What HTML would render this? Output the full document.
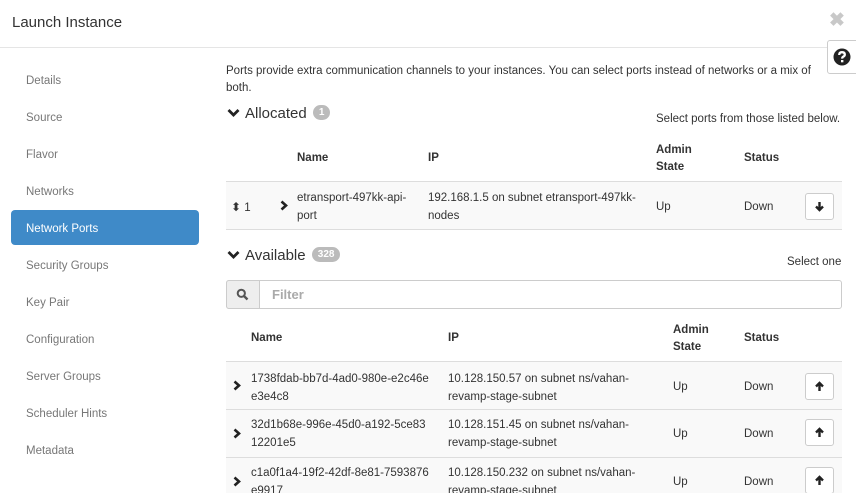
<!DOCTYPE html>
<html style="width:856px;height:493px;overflow:hidden"><head><meta charset="utf-8"><style>
*{margin:0;padding:0;box-sizing:border-box}
body{width:856px;height:493px;overflow:hidden;background:#fff;font-family:"Liberation Sans",sans-serif;color:#333;position:relative;font-size:11.5px}
.a{position:absolute;white-space:nowrap}
.side{color:#777;font-size:11.5px;left:26px}
.hd{font-weight:bold;font-size:11.5px;line-height:17px}
.row{position:absolute;left:226px;width:616px;background:#f9f9f9;border-bottom:1px solid #ddd;overflow:hidden}
.cell{position:absolute;line-height:18px;font-size:11.5px;white-space:nowrap}
.btn{position:absolute;left:579px;width:29px;height:27px;border:1px solid #ccc;border-radius:3px;background:#fff}
.btn svg{position:absolute;left:8px;top:7px}
.badge{display:inline-block;background:#bbb;color:#fff;border-radius:9px;font-size:10px;font-weight:bold;padding:2px 6px;vertical-align:middle;margin-left:2px;position:relative;top:-2px}
.chev{position:absolute}
</style></head><body>
<div class="a" style="left:12px;top:14px;font-size:15px;color:#333">Launch Instance</div>
<div class="a" style="left:829px;top:9px;font-size:19px;color:#c8c8c8;font-weight:bold">✖</div>
<div class="a" style="left:0;top:47px;width:856px;height:1px;background:#e5e5e5"></div>
<div class="a" style="left:827px;top:40px;width:30px;height:34px;border:1px solid #ccc;border-radius:3px 0 0 3px;background:#fff"></div>
<svg class="a" style="left:833px;top:48px" width="18" height="18" viewBox="0 0 18 18"><circle cx="9" cy="9" r="8.5" fill="#222"/><path d="M6.2 7 Q6.2 4.2 9 4.2 Q11.8 4.2 11.8 6.6 Q11.8 8 10 8.8 Q9.2 9.3 9.2 10.6" stroke="#fff" stroke-width="2.3" fill="none"/><rect x="8" y="12" width="2.4" height="2.3" fill="#fff"/></svg>

<div class="a side" style="top:75px">Details</div>
<div class="a side" style="top:112px">Source</div>
<div class="a side" style="top:149px">Flavor</div>
<div class="a side" style="top:186px">Networks</div>
<div class="a" style="left:11px;top:210px;width:188px;height:35px;background:#3f8ac8;border-radius:4px"></div>
<div class="a side" style="top:223px;color:#fff">Network Ports</div>
<div class="a side" style="top:260px">Security Groups</div>
<div class="a side" style="top:297px">Key Pair</div>
<div class="a side" style="top:334px">Configuration</div>
<div class="a side" style="top:371px">Server Groups</div>
<div class="a side" style="top:408px">Scheduler Hints</div>
<div class="a side" style="top:445px">Metadata</div>

<div class="a" style="left:226px;top:63px;line-height:17px;white-space:normal;width:610px">Ports provide extra communication channels to your instances. You can select ports instead of networks or a mix of both.</div>

<svg class="a" style="left:227px;top:108px" width="13" height="10" viewBox="0 0 13 10"><path d="M1.5 2 L6.5 7 L11.5 2" stroke="#222" stroke-width="2.8" fill="none"/></svg>
<div class="a" style="left:245px;top:105px;font-size:15px">Allocated <span class="badge">1</span></div>
<div class="a" style="left:656px;top:113px">Select ports from those listed below.</div>

<div class="a hd" style="left:297px;top:150px">Name</div>
<div class="a hd" style="left:428px;top:150px">IP</div>
<div class="a hd" style="left:656px;top:142px">Admin<br>State</div>
<div class="a hd" style="left:744px;top:150px">Status</div>

<div class="row" style="top:181px;height:49px;border-top:1px solid #ddd">
 <div class="cell" style="left:5px;top:16px"><span style="font-size:12px">⬍</span>&nbsp;1</div>
 <svg class="chev" style="left:54px;top:18px" width="8" height="11" viewBox="0 0 8 11"><path d="M1.5 1.5 L6 5.5 L1.5 9.5" stroke="#222" stroke-width="2.6" fill="none"/></svg>
 <div class="cell" style="left:71px;top:7px">etransport-497kk-api-<br>port</div>
 <div class="cell" style="left:202px;top:7px">192.168.1.5 on subnet etransport-497kk-<br>nodes</div>
 <div class="cell" style="left:430px;top:16px">Up</div>
 <div class="cell" style="left:518px;top:16px">Down</div>
 <div class="btn" style="top:11px"><svg width="11" height="11" viewBox="0 0 11 11"><path d="M5.5 1 V9 M2 5.5 L5.5 9 L9 5.5" stroke="#222" stroke-width="2.4" fill="none"/></svg></div>
</div>

<svg class="a" style="left:227px;top:250px" width="13" height="10" viewBox="0 0 13 10"><path d="M1.5 2 L6.5 7 L11.5 2" stroke="#222" stroke-width="2.8" fill="none"/></svg>
<div class="a" style="left:245px;top:247px;font-size:15px">Available <span class="badge">328</span></div>
<div class="a" style="left:787px;top:256px">Select one</div>

<div class="a" style="left:226px;top:280px;width:616px;height:29px;border:1px solid #ccc;border-radius:3px"></div>
<div class="a" style="left:226px;top:280px;width:34px;height:29px;background:#eee;border:1px solid #ccc;border-radius:3px 0 0 3px"></div>
<svg class="a" style="left:236px;top:288px" width="13" height="13" viewBox="0 0 13 13"><circle cx="5.3" cy="5.3" r="3.6" stroke="#555" stroke-width="2" fill="none"/><path d="M8 8 L11.5 11.5" stroke="#555" stroke-width="2.4"/></svg>
<div class="a" style="left:272px;top:287px;font-size:13px;color:#aaa;font-weight:bold">Filter</div>

<div class="a hd" style="left:251px;top:330px">Name</div>
<div class="a hd" style="left:448px;top:330px">IP</div>
<div class="a hd" style="left:673px;top:322px">Admin<br>State</div>
<div class="a hd" style="left:744px;top:330px">Status</div>

<div class="row" style="top:361px;height:49px;border-top:1px solid #ddd">
 <svg class="chev" style="left:7px;top:18px" width="8" height="11" viewBox="0 0 8 11"><path d="M1.5 1.5 L6 5.5 L1.5 9.5" stroke="#222" stroke-width="2.6" fill="none"/></svg>
 <div class="cell" style="left:25px;top:8px">1738fdab-bb7d-4ad0-980e-e2c46e<br>e3e4c8</div>
 <div class="cell" style="left:222px;top:8px">10.128.150.57 on subnet ns/vahan-<br>revamp-stage-subnet</div>
 <div class="cell" style="left:447px;top:16px">Up</div>
 <div class="cell" style="left:518px;top:16px">Down</div>
 <div class="btn" style="top:11px"><svg width="11" height="11" viewBox="0 0 11 11"><path d="M5.5 10 V2 M2 5.5 L5.5 2 L9 5.5" stroke="#222" stroke-width="2.4" fill="none"/></svg></div>
</div>
<div class="row" style="top:410px;height:48px">
 <svg class="chev" style="left:7px;top:18px" width="8" height="11" viewBox="0 0 8 11"><path d="M1.5 1.5 L6 5.5 L1.5 9.5" stroke="#222" stroke-width="2.6" fill="none"/></svg>
 <div class="cell" style="left:25px;top:6px">32d1b68e-996e-45d0-a192-5ce83<br>12201e5</div>
 <div class="cell" style="left:222px;top:6px">10.128.151.45 on subnet ns/vahan-<br>revamp-stage-subnet</div>
 <div class="cell" style="left:447px;top:15px">Up</div>
 <div class="cell" style="left:518px;top:15px">Down</div>
 <div class="btn" style="top:9px"><svg width="11" height="11" viewBox="0 0 11 11"><path d="M5.5 10 V2 M2 5.5 L5.5 2 L9 5.5" stroke="#222" stroke-width="2.4" fill="none"/></svg></div>
</div>
<div class="row" style="top:458px;height:35px;border-bottom:none">
 <svg class="chev" style="left:7px;top:18px" width="8" height="11" viewBox="0 0 8 11"><path d="M1.5 1.5 L6 5.5 L1.5 9.5" stroke="#222" stroke-width="2.6" fill="none"/></svg>
 <div class="cell" style="left:25px;top:6px">c1a0f1a4-19f2-42df-8e81-7593876<br>e9917</div>
 <div class="cell" style="left:222px;top:6px">10.128.150.232 on subnet ns/vahan-<br>revamp-stage-subnet</div>
 <div class="cell" style="left:447px;top:15px">Up</div>
 <div class="cell" style="left:518px;top:15px">Down</div>
 <div class="btn" style="top:9px"><svg width="11" height="11" viewBox="0 0 11 11"><path d="M5.5 10 V2 M2 5.5 L5.5 2 L9 5.5" stroke="#222" stroke-width="2.4" fill="none"/></svg></div>
</div>
</body></html>
